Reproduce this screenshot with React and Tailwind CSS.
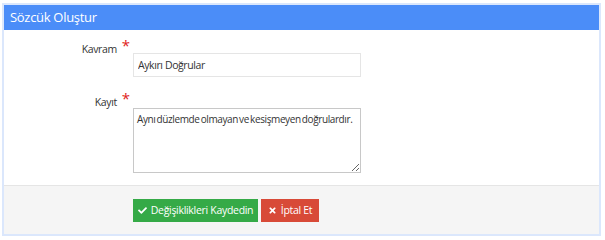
import React, { useState } from 'react';
import { FaCheck, FaTimes } from 'react-icons/fa';

function SozcukOlustur() {
  const [kavram, setKavram] = useState('Aykırı Doğrular');
  const [kayit, setKayit] = useState('Aynı düzlemde olmayan ve kesişmeyen doğrulardır.');

  return (
    <div className="pt-[3px] pl-[2px] font-['Open_Sans',sans-serif]">
      <div className="w-[599px] border-2 border-[#dbe7fc] bg-white">
        {/* Header */}
        <div className="h-[25px] bg-[#4b8df8] pl-[6px] flex items-center">
          <span className="text-white text-[13px] tracking-[-0.3px] leading-none">Sözcük Oluştur</span>
        </div>

        {/* Body */}
        <div className="pt-[8px] pb-[12px] flex flex-col gap-[14px]">
          <div className="flex items-start">
            <div className="w-[129px] flex justify-end pr-[3px]">
              <span className="mt-[4px] text-[10.5px] tracking-[-0.4px] leading-[15px] text-[#333]">Kavram</span>
              <span className="ml-[5px] text-[15px] leading-none text-[#e02222]">*</span>
            </div>
            <input
              type="text"
              value={kavram}
              onChange={(e) => setKavram(e.target.value)}
              className="mt-[15px] w-[228px] h-[24px] border border-[#e5e5e5] px-[4px] text-[10.5px] tracking-[-0.4px] text-[#333] outline-none"
            />
          </div>
          <div className="flex items-start">
            <div className="w-[129px] flex justify-end pr-[3px]">
              <span className="mt-[4px] text-[10.5px] tracking-[-0.4px] leading-[15px] text-[#333]">Kayıt</span>
              <span className="ml-[5px] text-[15px] leading-none text-[#e02222]">*</span>
            </div>
            <textarea
              value={kayit}
              onChange={(e) => setKayit(e.target.value)}
              className="mt-[17px] w-[228px] h-[65px] border border-[#c8c8c8] px-[3px] py-[3px] text-[10px] tracking-[-0.4px] [word-spacing:-1px] leading-[15px] text-[#333] outline-none overflow-hidden resize-y"
            />
          </div>
        </div>

        {/* Footer */}
        <div className="border-t border-[#e5e5e5] bg-[#f5f5f5] pt-[13px] pb-[12px] pl-[129px] flex gap-[3px]">
          <button className="h-[23px] w-[125px] bg-[#35aa47] text-white text-[10.5px] tracking-[-0.3px] whitespace-nowrap flex items-center justify-center gap-[4px]">
            <FaCheck className="text-[9px] shrink-0" />
            Değişiklikleri Kaydedin
          </button>
          <button className="h-[23px] w-[58px] bg-[#d84a38] text-white text-[10.5px] tracking-[-0.3px] whitespace-nowrap flex items-center justify-center gap-[4px]">
            <FaTimes className="text-[9px] shrink-0" />
            İptal Et
          </button>
        </div>
      </div>
    </div>
  );
}

export default function App() {
  return <SozcukOlustur />;
}
